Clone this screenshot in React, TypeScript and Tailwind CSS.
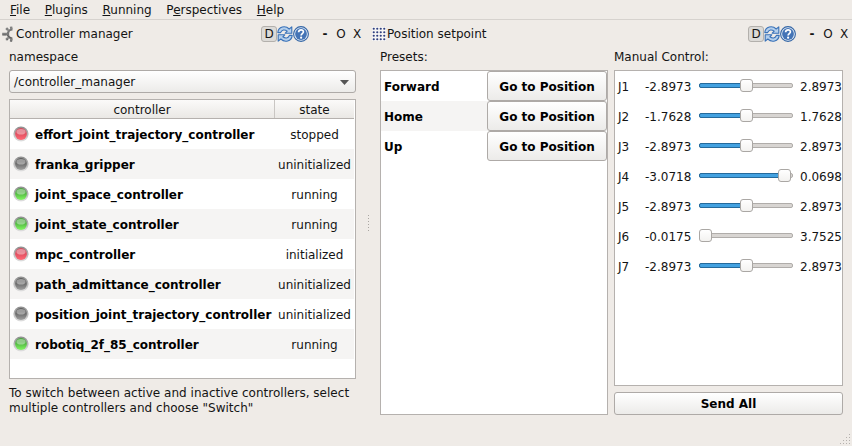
import React from "react";

const controllers = [
  { name: "effort_joint_trajectory_controller", state: "stopped", led: "red" },
  { name: "franka_gripper", state: "uninitialized", led: "gray" },
  { name: "joint_space_controller", state: "running", led: "green" },
  { name: "joint_state_controller", state: "running", led: "green" },
  { name: "mpc_controller", state: "initialized", led: "red" },
  { name: "path_admittance_controller", state: "uninitialized", led: "gray" },
  { name: "position_joint_trajectory_controller", state: "uninitialized", led: "gray" },
  { name: "robotiq_2f_85_controller", state: "running", led: "green" },
];

const joints = [
  { name: "J1", min: "-2.8973", max: "2.8973", pos: 41 },
  { name: "J2", min: "-1.7628", max: "1.7628", pos: 41 },
  { name: "J3", min: "-2.8973", max: "2.8973", pos: 41 },
  { name: "J4", min: "-3.0718", max: "0.0698", pos: 79 },
  { name: "J5", min: "-2.8973", max: "2.8973", pos: 41 },
  { name: "J6", min: "-0.0175", max: "3.7525", pos: 0 },
  { name: "J7", min: "-2.8973", max: "2.8973", pos: 41 },
];

const ledColors: Record<string, string[]> = {
  red: ["#d8475a", "#ff6a76"],
  gray: ["#5c5c5c", "#a0a0a0"],
  green: ["#46a83a", "#82f662"],
};

function Led({ color }: { color: string }) {
  const [top, bottom] = ledColors[color];
  const id = "led-" + color;
  return (
    <svg width="16" height="16" viewBox="0 0 16 16" className="shrink-0">
      <defs>
        <linearGradient id={id} x1="0" y1="0" x2="0" y2="1">
          <stop offset="0.3" stopColor={top} />
          <stop offset="1" stopColor={bottom} />
        </linearGradient>
        <linearGradient id="led-ring" x1="0" y1="0" x2="0" y2="1">
          <stop offset="0" stopColor="#8c8c8c" />
          <stop offset="1" stopColor="#e2e2e2" />
        </linearGradient>
      </defs>
      <circle cx="8" cy="8" r="7.6" fill="url(#led-ring)" />
      <circle cx="8" cy="8" r="5.9" fill={"url(#" + id + ")"} />
      <ellipse cx="8" cy="5.8" rx="4.6" ry="2.8" fill="#fff" opacity="0.4" />
    </svg>
  );
}

function Gear() {
  return (
    <svg width="12" height="16" viewBox="0 0 12 16">
      <path d="M11.5 3.4A4.6 4.6 0 0 0 11.5 12.6" fill="none" stroke="#777" strokeWidth="2.4" />
      <path d="M7.2 4.2 5.2 2.2M6.2 8H1.2M7.2 11.8 5.2 13.8M10.4 2.9 10 .6M10.4 13.1 10 15.4" stroke="#808080" strokeWidth="2.5" />
      <path d="M5.6 9H1.4M6.6 13.2l-1 1M11 15.2H9.2M10.5 11.6A4 4 0 0 1 6.6 9.4" fill="none" stroke="#555" strokeWidth="0.8" />
    </svg>
  );
}

function DotGrid() {
  const steps = [2, 6, 10, 14];
  return (
    <svg width="14" height="14" viewBox="0 0 16 16">
      <rect width="16" height="16" fill="#f6f5f4" />
      {steps.map((y) => steps.map((x) => <circle key={x + "-" + y} cx={x} cy={y} r="1.25" fill="#2f3f80" />))}
    </svg>
  );
}

function Refresh() {
  return (
    <svg width="16" height="16" viewBox="0 0 16 16">
      <g fill="#b4cfec" stroke="#3a72b8" strokeWidth="1.1" strokeLinejoin="round">
        <path d="M.8 6.6C1.4 .4 8.4 -.8 12.2 3L14.8 .8V7.2H8.2L10.2 5.2C7.5 3.2 5 3.6 3.6 6.6Z" />
        <path d="M15.2 9.4C14.6 15.6 7.6 16.8 3.8 13L1.2 15.2V8.8H7.8L5.8 10.8C8.5 12.8 11 12.4 12.4 9.4Z" />
      </g>
    </svg>
  );
}

function Help() {
  return (
    <svg width="16" height="16" viewBox="0 0 16 16">
      <circle cx="8" cy="8" r="7.4" fill="#e4edf7" stroke="#3465a4" strokeWidth="1.1" />
      <circle cx="8" cy="8" r="5.9" fill="#4474b6" />
      <path d="M5.6 6.2C5.6 3 10.6 3.2 10.4 6C10.3 7.6 8.1 7.7 8.1 9.5" fill="none" stroke="#fff" strokeWidth="1.7" />
      <circle cx="8.1" cy="11.7" r="1.1" fill="#fff" />
    </svg>
  );
}

function DockTitle({ icon, title }: { icon: React.ReactNode; title: string }) {
  return (
    <div className="flex h-7 items-center">
      <span className="w-[15px] shrink-0">{icon}</span>
      <span className="flex-1">{title}</span>
      <span className="flex h-4 w-4 items-center justify-center rounded-[3px] border border-[#b3b0ac] bg-[#dcdad7]">D</span>
      <Refresh />
      <Help />
      <span className="ml-2 w-4 text-center font-bold">-</span>
      <span className="w-4 text-center">O</span>
      <span className="w-4 text-center">X</span>
    </div>
  );
}

const buttonStyle = "rounded-[3px] border border-[#aeaaa7] bg-linear-to-b from-white to-[#ecebe9] font-bold text-black";

function Slider({ pos }: { pos: number }) {
  return (
    <div className="relative h-[14px] w-[94px]">
      <div className="mt-1 h-[5px] rounded-[2px] border border-[#b0adaa] bg-[#d8d5d2]" />
      <div
        className="absolute left-0 top-1 h-[5px] rounded-l-[2px] border border-[#256a9c] bg-[#43a1e0]"
        style={{ width: pos + 2, visibility: pos ? "visible" : "hidden" }}
      />
      <div
        className="absolute top-0 h-[13px] w-[13px] rounded-[3px] border border-[#aaa7a4] bg-linear-to-b from-white to-[#f3f2f0]"
        style={{ left: pos }}
      />
    </div>
  );
}

export default function App() {
  return (
    <div className="flex h-[446px] w-[852px] flex-col overflow-hidden bg-[#efebe7] font-['DejaVu_Sans',sans-serif] text-[12px] leading-[15px] text-[#141414]">
      <nav className="flex h-5 shrink-0 gap-[14.7px] border-b border-[#d6d2ce] pl-[10px] pt-[3px]">
        <span><u>F</u>ile</span>
        <span><u>P</u>lugins</span>
        <span><u>R</u>unning</span>
        <span>P<u>e</u>rspectives</span>
        <span><u>H</u>elp</span>
      </nav>
      <div className="flex flex-1">
        <section className="w-[365px] pl-[1px]">
          <DockTitle icon={<Gear />} title="Controller manager" />
          <div className="flex flex-col pl-2 pr-[9px]">
            <label className="mt-[2px]">namespace</label>
            <div className="mt-[5px] flex h-[23px] items-center justify-between rounded-[3px] border border-[#aeaaa7] bg-linear-to-b from-white to-[#ecebe9] pl-1 pr-[6px]">
              <span className="pt-[2px]">/controller_manager</span>
              <svg className="mt-[2px]" width="9" height="5" viewBox="0 0 9 5"><path d="M0 0H9L4.5 5Z" fill="#555" /></svg>
            </div>
            <div className="mt-[6px] h-[280px] border border-[#b5b1ae] bg-white">
              <div className="mr-[1px] flex h-[19px] border-b border-[#b5b1ae] bg-linear-to-b from-[#fbfaf9] to-[#eae8e5] text-center">
                <span className="h-full w-[265px] border-r border-[#c9c6c3] pt-[3px]">controller</span>
                <span className="flex-1 pt-[3px]">state</span>
              </div>
              {controllers.map((c) => (
                <div key={c.name} className="mr-[1px] flex h-[30px] items-center odd:bg-[#f5f4f3] even:bg-white">
                  <div className="flex w-[265px] items-center gap-[6px] pl-[3px]">
                    <Led color={c.led} />
                    <span className="whitespace-nowrap pt-[3px] font-bold text-black">{c.name}</span>
                  </div>
                  <span className="flex-1 pt-[2px] text-center">{c.state}</span>
                </div>
              ))}
            </div>
            <p className="mt-[7px] whitespace-nowrap tracking-[0.02px]">To switch between active and inactive controllers, select<br />multiple controllers and choose "Switch"</p>
          </div>
        </section>
        <div className="flex w-[6px] flex-col items-center gap-[1px] pl-[1px] pt-[195px]">
          {Array.from({ length: 6 }, (_, i) => (
            <i key={i} className="mb-[1px] h-[1px] w-[1px] shrink-0 bg-[#aaa6a2]" />
          ))}
        </div>
        <section className="w-[481px] pl-[1px]">
          <DockTitle icon={<DotGrid />} title="Position setpoint" />
          <div className="flex gap-[6px] pl-2">
            <div className="w-[228px]">
              <div className="mt-[2px]">Presets:</div>
              <div className="mt-[5px] h-[345px] border border-[#b5b1ae] bg-white">
                {["Forward", "Home", "Up"].map((p) => (
                  <div key={p} className="flex h-[30px] items-center justify-between pl-[3px] font-bold text-black even:bg-[#f5f4f3]">
                    <span className="pt-[2px]">{p}</span>
                    <button className={buttonStyle + " h-[30px] w-[120px] pt-[2px]"}>Go to Position</button>
                  </div>
                ))}
              </div>
            </div>
            <div className="flex w-[229px] flex-col">
              <div className="mt-[2px]">Manual Control:</div>
              <div className="mt-[5px] h-[316px] overflow-hidden border border-[#b5b1ae] bg-white">
                {joints.map((j) => (
                  <div key={j.name} className="flex h-[30px] items-center">
                    <span className="w-[30px] shrink-0 pl-[3px] pt-[2px]">{j.name}</span>
                    <span className="w-[54px] shrink-0 pt-[2px]">{j.min}</span>
                    <Slider pos={j.pos} />
                    <span className="pl-[7px] pt-[2px]">{j.max}</span>
                  </div>
                ))}
              </div>
              <button className={buttonStyle + " mt-[6px] h-[23px] pt-[2px]"}>Send All</button>
            </div>
          </div>
        </section>
      </div>
      <svg className="absolute left-[839px] top-[433px]" width="12" height="12" viewBox="0 0 12 12" fill="#b5b1ae">
        {[0, 1, 2, 3].map((r) => Array.from({ length: r + 1 }, (_, i) => (
          <rect key={r + "-" + i} x={10 - i * 3} y={1 + r * 3} width="1" height="1" />
        )))}
      </svg>
    </div>
  );
}
